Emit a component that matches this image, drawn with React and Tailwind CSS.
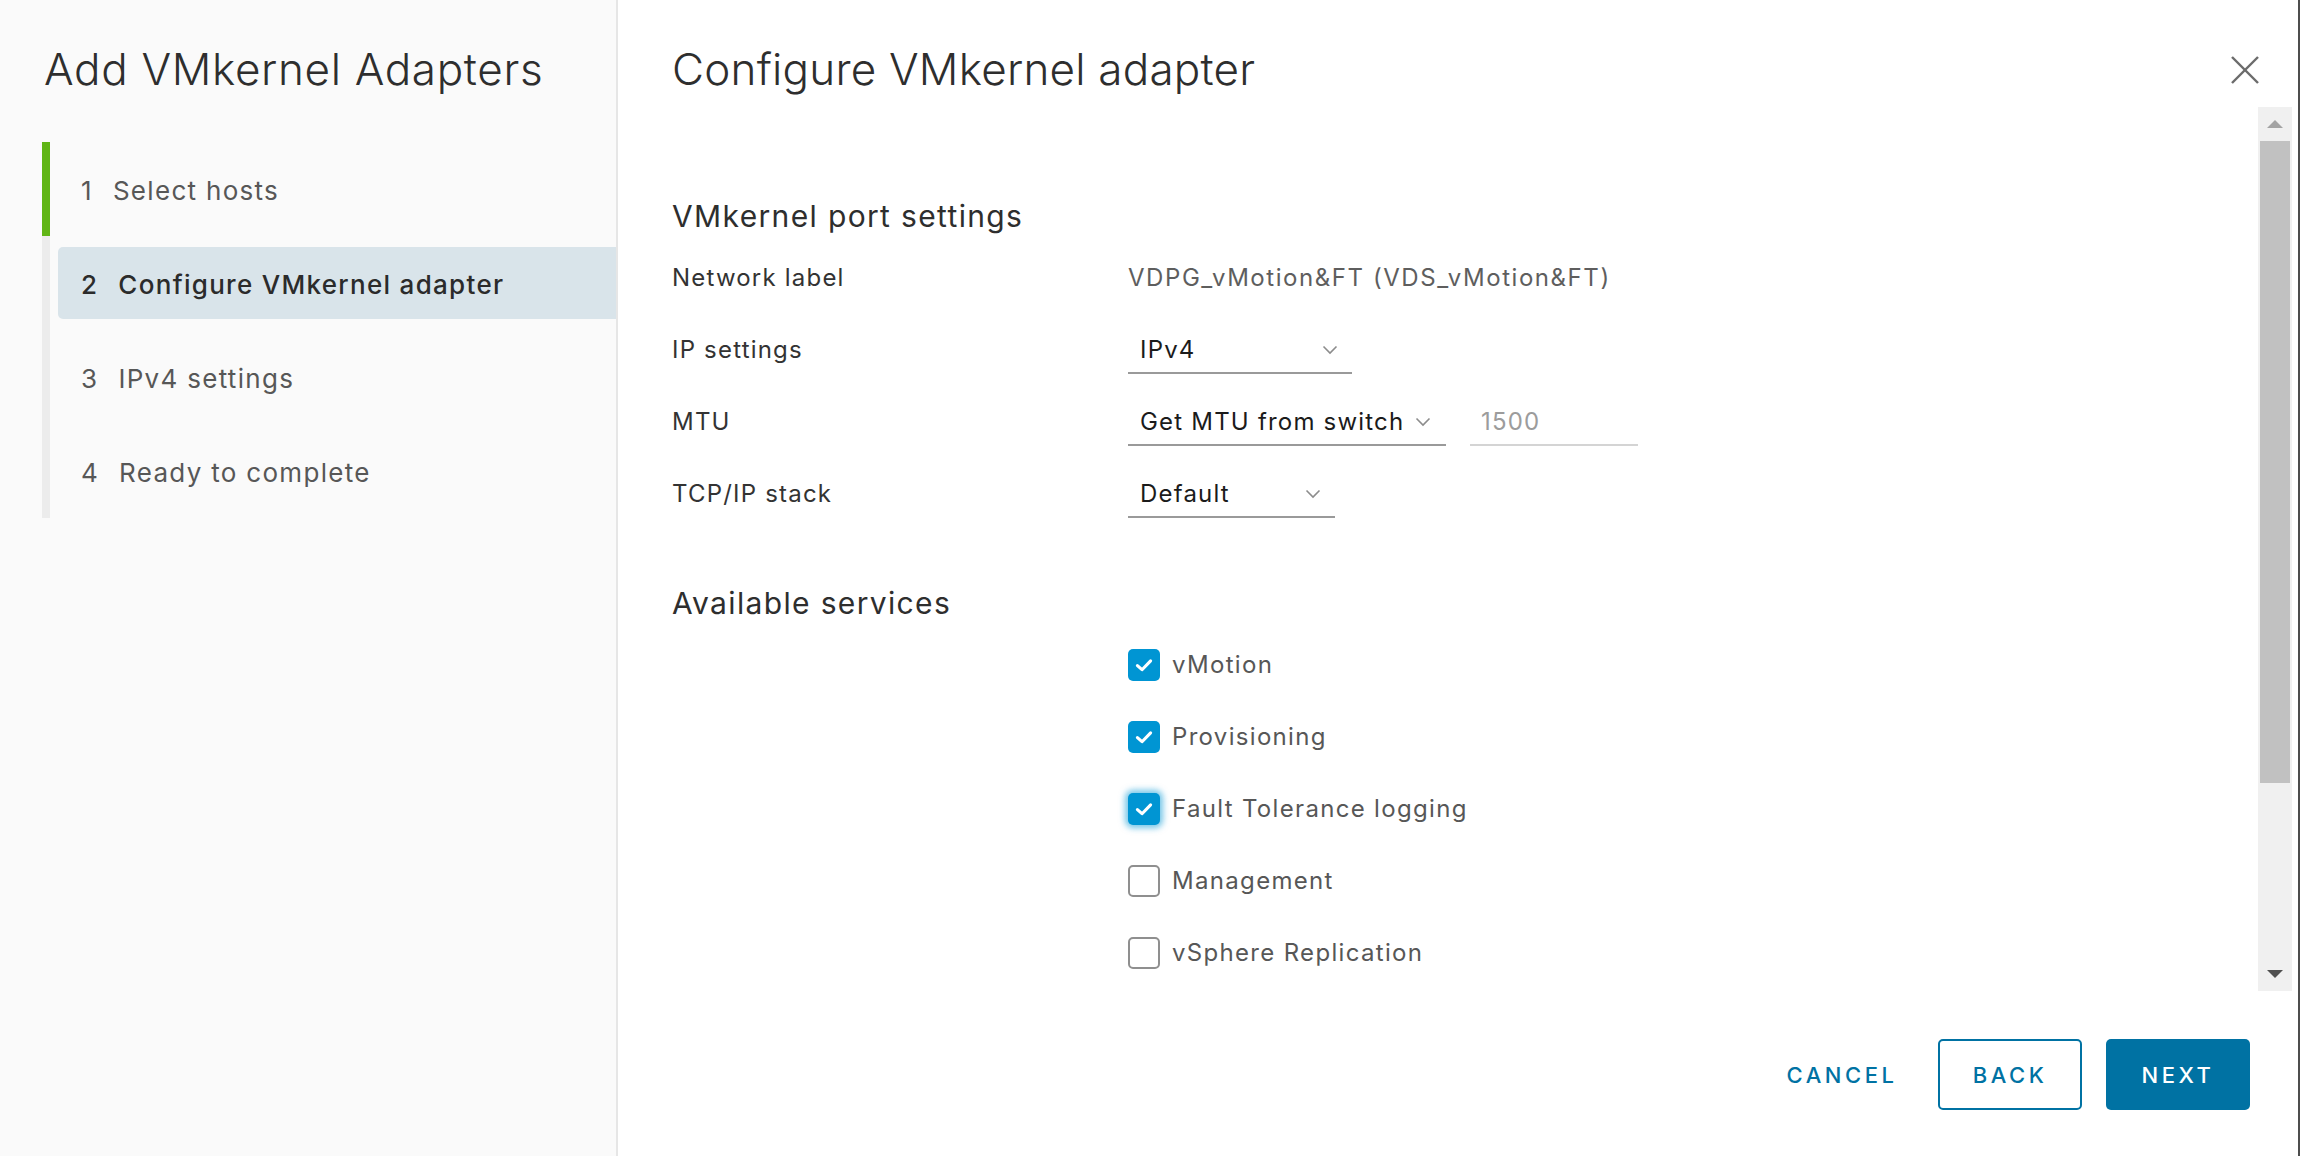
import React from "react";

const Chevron = () => (
  <svg width="16" height="10" viewBox="0 0 16 10" fill="none">
    <polyline points="1.5,1.5 8,8 14.5,1.5" stroke="#8c8c8c" strokeWidth="1.6" />
  </svg>
);

const Check = () => (
  <svg width="22" height="22" viewBox="0 0 20 20" fill="none">
    <polyline points="4,10.5 8.2,14.3 16,6.2" stroke="#fff" strokeWidth="2.8" strokeLinecap="round" strokeLinejoin="round" />
  </svg>
);

const steps = [
  { n: "1", label: "Select hosts", done: true },
  { n: "2", label: "Configure VMkernel adapter", active: true },
  { n: "3", label: "IPv4 settings" },
  { n: "4", label: "Ready to complete" },
];

const services = [
  { label: "vMotion", checked: true },
  { label: "Provisioning", checked: true },
  { label: "Fault Tolerance logging", checked: true, focus: true },
  { label: "Management" },
  { label: "vSphere Replication" },
];

const Select = ({ value, width, chevronGap }) => (
  <div className={`flex items-center justify-between h-[46px] border-b-2 border-[#9a9a9a] pl-[12px] ${width} ${chevronGap}`}>
    <span className="text-[24px] tracking-[0.05em] text-[#1b1b1b]">{value}</span>
    <Chevron />
  </div>
);

export default function App() {
  return (
    <div className="flex w-[2300px] h-[1156px] bg-white border-r-2 border-[#4d4d4d] font-['Inter','Lato',sans-serif] overflow-hidden">
      {/* sidebar */}
      <div className="w-[618px] shrink-0 bg-[#fafafa] border-r-2 border-[#e6e6e6] flex flex-col">
        <div className="pl-[44px] pt-[43px] leading-[52px] text-[44px] tracking-[0.015em] font-light text-[#2e2e2e]">
          Add VMkernel Adapters
        </div>
        <div className="mt-[47px] ml-[42px] flex flex-col">
          {steps.map((s) => (
            <div key={s.n} className="flex h-[94px]">
              <div className={`w-[8px] ${s.done ? "bg-[#60b515]" : "bg-[#ececec]"}`} />
              <div className="flex-1 py-[11px] pl-[8px]">
                <div
                  className={`h-[72px] flex items-center pl-[23px] pt-[2px] rounded-l-[5px] text-[26px] tracking-[0.05em] ${
                    s.active ? "bg-[#d9e4ea] text-[#2b2b2b] font-medium" : "text-[#575757]"
                  }`}
                >
                  <span className="mr-[20px]">{s.n}</span>
                  <span>{s.label}</span>
                </div>
              </div>
            </div>
          ))}
        </div>
      </div>

      {/* main */}
      <div className="flex-1 flex flex-col">
        <div className="h-[107px] flex justify-between pl-[54px] pr-[38px]">
          <div className="pt-[43px] leading-[52px] text-[44px] tracking-[0.005em] font-light text-[#2e2e2e]">
            Configure VMkernel adapter
          </div>
          <div className="pt-[55px]">
            <svg width="30" height="30" viewBox="0 0 30 30" fill="none">
              <line x1="2" y1="2" x2="28" y2="28" stroke="#6b6b6b" strokeWidth="2.4" />
              <line x1="28" y1="2" x2="2" y2="28" stroke="#6b6b6b" strokeWidth="2.4" />
            </svg>
          </div>
        </div>

        <div className="flex h-[884px]">
          <div className="flex-1 pl-[54px] pt-[2px]">
            <div className="mt-[87px] mb-[6px] leading-[40px] text-[30px] tracking-[0.045em] text-[#2e2e2e]">
              VMkernel port settings
            </div>

            <div className="flex items-center h-[72px] text-[24px] tracking-[0.05em]">
              <div className="w-[456px] text-[#333]">Network label</div>
              <div className="text-[#5e5e5e] tracking-[0.065em]">VDPG_vMotion&amp;FT (VDS_vMotion&amp;FT)</div>
            </div>
            <div className="flex items-center h-[72px] text-[24px] tracking-[0.05em]">
              <div className="w-[456px] text-[#333]">IP settings</div>
              <div className="pt-[2px]">
                <Select value="IPv4" width="w-[224px]" chevronGap="pr-[14px]" />
              </div>
            </div>
            <div className="flex items-center h-[72px] text-[24px] tracking-[0.05em]">
              <div className="w-[456px] text-[#333]">MTU</div>
              <div className="pt-[2px] flex gap-[24px]">
                <Select value="Get MTU from switch" width="w-[318px]" chevronGap="pr-[15px]" />
                <div className="w-[168px] h-[46px] flex items-center pl-[11px] border-b-2 border-[#d4d4d4] text-[#9c9c9c]">
                  1500
                </div>
              </div>
            </div>
            <div className="flex items-center h-[72px] text-[24px] tracking-[0.05em]">
              <div className="w-[456px] text-[#333]">TCP/IP stack</div>
              <div className="pt-[2px]">
                <Select value="Default" width="w-[207px]" chevronGap="pr-[14px]" />
              </div>
            </div>

            <div className="mt-[53px] mb-[6px] leading-[40px] text-[30px] tracking-[0.045em] text-[#2e2e2e]">
              Available services
            </div>
            <div className="pl-[456px] flex flex-col">
              {services.map((s) => (
                <div key={s.label} className="flex items-center h-[72px]">
                  <div
                    className={`w-[32px] h-[32px] rounded-[5px] flex items-center justify-center ${
                      s.checked ? "bg-[#0095d3]" : "bg-white border-2 border-[#8f8f8f]"
                    } ${s.focus ? "shadow-[0_0_6px_3px_rgba(0,149,211,0.55)]" : ""}`}
                  >
                    {s.checked && <Check />}
                  </div>
                  <span className="ml-[12px] text-[24px] tracking-[0.055em] text-[#575757]">{s.label}</span>
                </div>
              ))}
            </div>
          </div>

          {/* scrollbar */}
          <div className="w-[34px] mr-[6px] bg-[#f0f0f0] flex flex-col items-center">
            <div className="h-[34px] flex items-center justify-center">
              <div className="w-0 h-0 border-l-[8px] border-r-[8px] border-b-[8px] border-l-transparent border-r-transparent border-b-[#a3a3a3]" />
            </div>
            <div className="w-[30px] h-[642px] bg-[#c1c1c1]" />
            <div className="flex-1" />
            <div className="h-[34px] flex items-center justify-center">
              <div className="w-0 h-0 border-l-[8px] border-r-[8px] border-t-[8px] border-l-transparent border-r-transparent border-t-[#505050]" />
            </div>
          </div>
        </div>

        {/* footer */}
        <div className="flex-1 flex justify-end items-start pt-[48px] pr-[48px] gap-[24px]">
          <button className="w-[144px] h-[71px] pt-[2px] rounded-[5px] text-[22px] font-medium tracking-[0.16em] text-[#0072a3]">
            CANCEL
          </button>
          <button className="w-[144px] h-[71px] pt-[2px] rounded-[5px] border-2 border-[#0072a3] text-[22px] font-medium tracking-[0.16em] text-[#0072a3]">
            BACK
          </button>
          <button className="w-[144px] h-[71px] pt-[2px] rounded-[5px] bg-[#0072a3] text-[22px] font-medium tracking-[0.16em] text-white">
            NEXT
          </button>
        </div>
      </div>
    </div>
  );
}
